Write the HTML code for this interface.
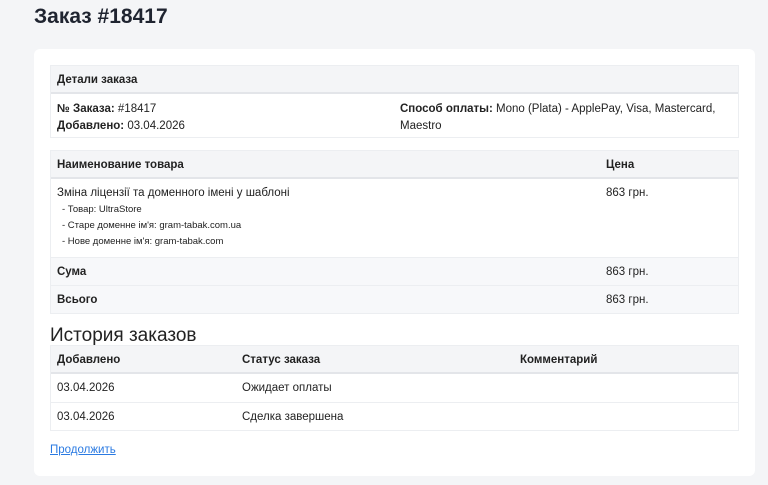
<!DOCTYPE html>
<html><head><meta charset="utf-8"><style>
*{box-sizing:border-box;margin:0;padding:0}
body{width:768px;height:485px;background:#f4f5f7;font-family:"Liberation Sans",sans-serif;color:#222;font-size:11.5px;position:relative;overflow:hidden}
h1{position:absolute;left:34px;top:5px;font-size:21px;font-weight:bold;color:#1f2430}
.card{position:absolute;left:34px;top:49px;width:721px;height:427px;background:#fff;border-radius:6px}
.t{position:absolute;left:16px;width:689px;border:1px solid #eceef1}
.h{background:#f4f5f7;border-bottom:2px solid #e3e5e9;font-weight:bold;height:28px;position:relative}
.r{position:relative;border-top:1px solid #eceef1}
.c{position:absolute;line-height:17px}
.h .c,.r>.c{top:6px !important}
b{font-weight:bold}
.sub{font-size:9.5px;line-height:16px;padding-left:5px}
h2{position:absolute;left:16px;top:276px;font-size:19px;font-weight:normal;color:#222}
a{position:absolute;left:16px;top:395px;color:#2a7ae2;text-decoration:underline;font-size:11.5px}
</style></head><body>
<h1>Заказ #18417</h1>
<div class="card">
<div class="t" style="top:16px;height:73px">
 <div class="h"><span class="c" style="left:6px;top:5px">Детали заказа</span></div>
 <div class="c" style="left:6px;top:35px"><b>№ Заказа:</b> #18417<br><b>Добавлено:</b> 03.04.2026</div>
 <div class="c" style="left:349px;top:35px"><b>Способ оплаты:</b> Mono (Plata) - ApplePay, Visa, Mastercard,<br>Maestro</div>
</div>
<div class="t" style="top:101px;height:164px">
 <div class="h"><span class="c" style="left:6px;top:5px">Наименование товара</span><span class="c" style="left:555px;top:5px">Цена</span></div>
 <div class="r" style="height:78px;border-top:none">
  <div class="c" style="left:6px;top:5px">Зміна ліцензії та доменного імені у шаблоні
   <div class="sub">- Товар: UltraStore</div><div class="sub">- Старе доменне ім'я: gram-tabak.com.ua</div><div class="sub">- Нове доменне ім'я: gram-tabak.com</div></div>
  <span class="c" style="left:555px;top:5px">863 грн.</span></div>
 <div class="r" style="height:28px;background:#f7f8fa"><span class="c" style="left:6px;top:5px;font-weight:bold">Сума</span><span class="c" style="left:555px;top:5px">863 грн.</span></div>
 <div class="r" style="height:28px;background:#f7f8fa"><span class="c" style="left:6px;top:5px;font-weight:bold">Всього</span><span class="c" style="left:555px;top:5px">863 грн.</span></div>
</div>
<h2>История заказов</h2>
<div class="t" style="top:296px;height:86px">
 <div class="h"><span class="c" style="left:6px;top:5px">Добавлено</span><span class="c" style="left:191px;top:5px">Статус заказа</span><span class="c" style="left:469px;top:5px">Комментарий</span></div>
 <div class="r" style="height:28px;border-top:none"><span class="c" style="left:6px;top:5px">03.04.2026</span><span class="c" style="left:191px;top:5px">Ожидает оплаты</span></div>
 <div class="r" style="height:28px"><span class="c" style="left:6px;top:5px">03.04.2026</span><span class="c" style="left:191px;top:5px">Сделка завершена</span></div>
</div>
<a>Продолжить</a>
</div>
</body></html>
